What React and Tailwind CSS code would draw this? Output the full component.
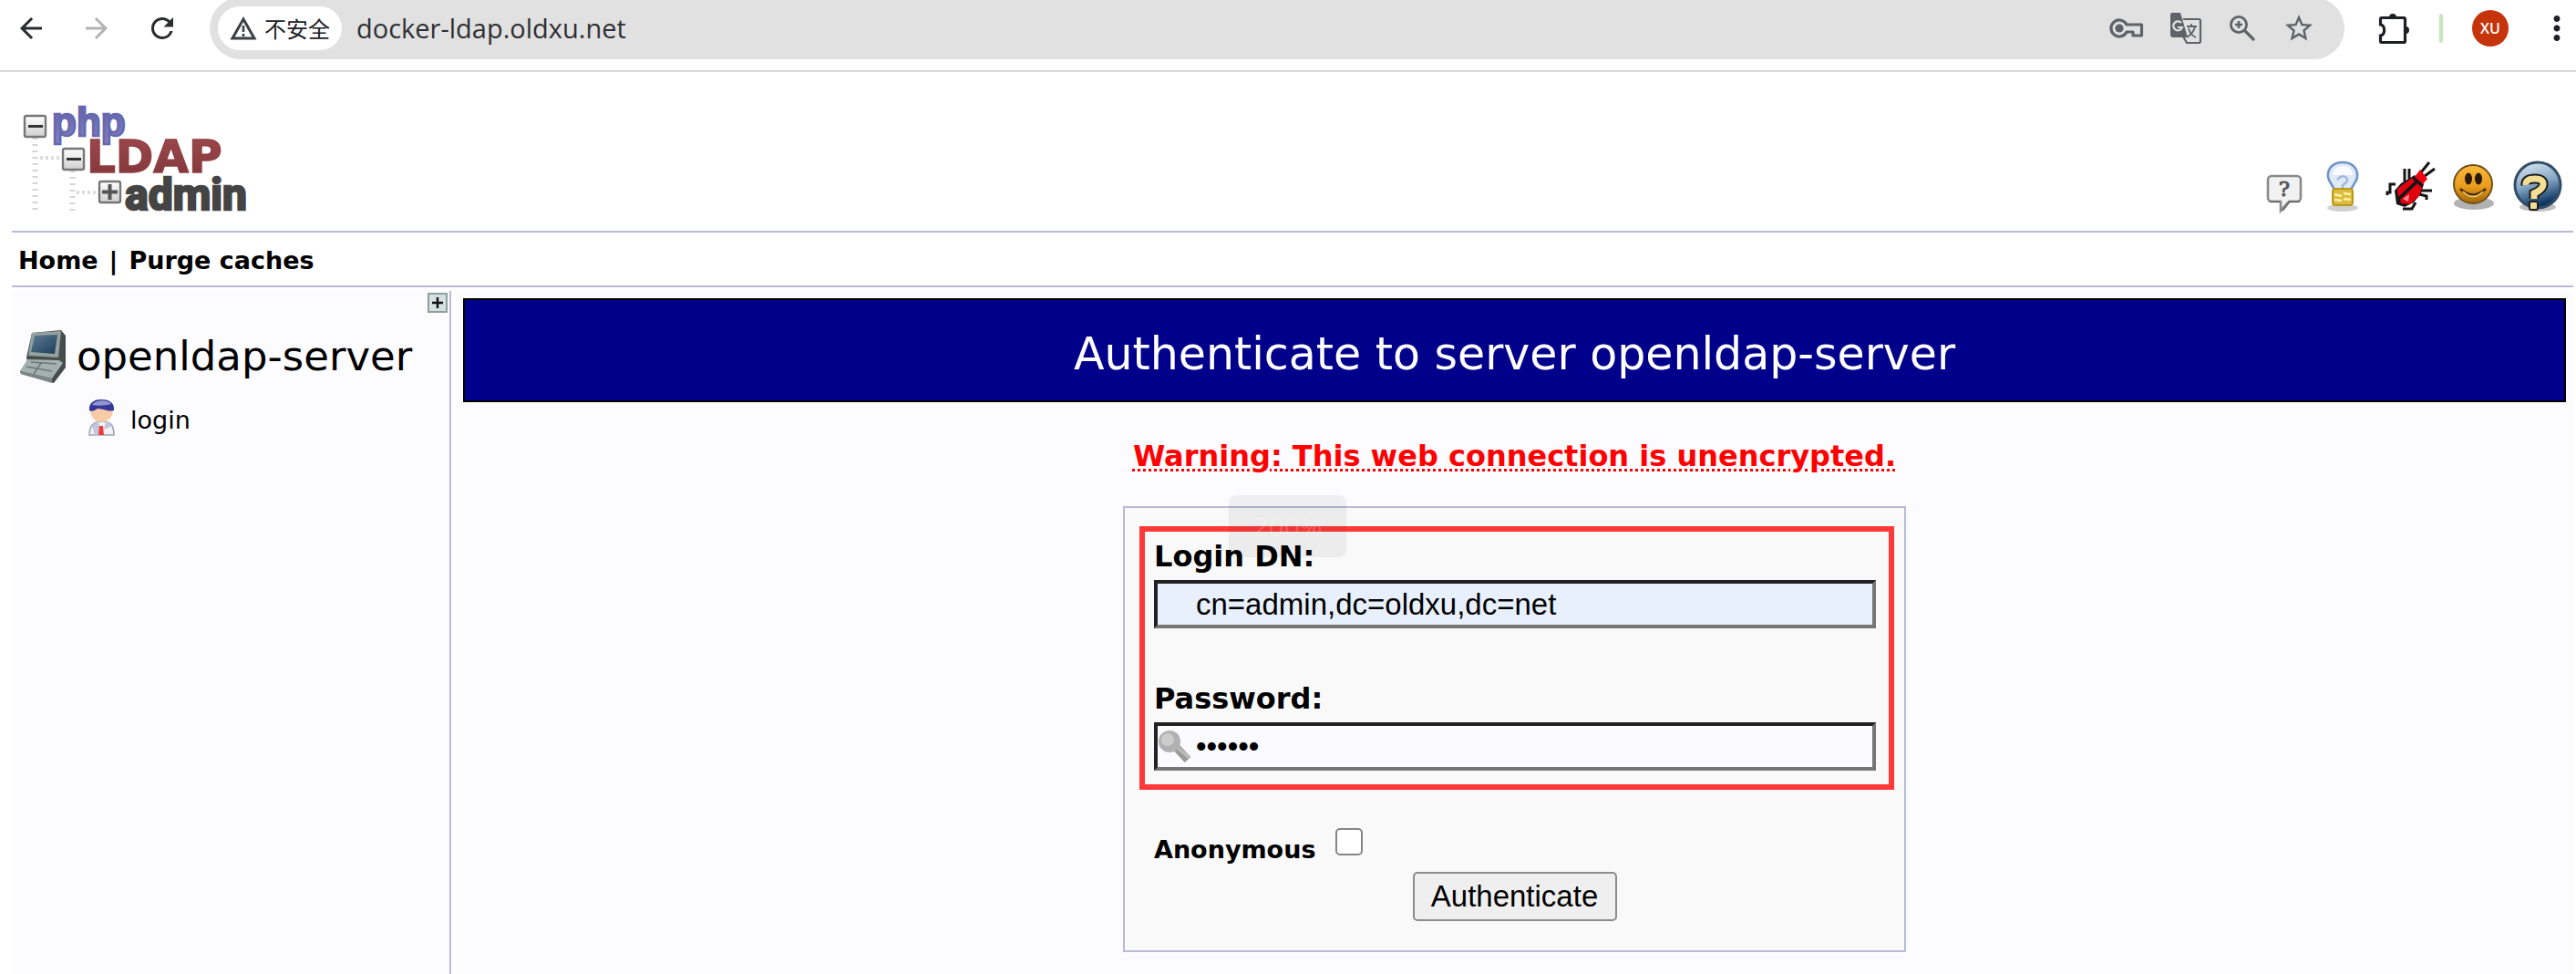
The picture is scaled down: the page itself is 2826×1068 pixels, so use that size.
import React from 'react';
import { MdArrowBack, MdArrowForward, MdRefresh, MdStarBorder, MdMoreVert } from 'react-icons/md';

const WarningIcon = () => (
  <svg width="30" height="28" viewBox="0 0 30 28" fill="none" stroke="#3c4043" strokeWidth="3">
    <path d="M15 4 L27 25 H3 Z" />
    <path d="M15 11 v7 M15 20 v3" strokeWidth="2.6" />
  </svg>
);

const PasswordIcon = () => (
  <svg width="38" height="24" viewBox="0 0 38 24">
    <path
      d="M19 8 A9 9 0 1 0 19 16 H26 V20 H35.500 V8 Z"
      fill="none"
      stroke="#5f6368"
      strokeWidth="3.200"
      strokeLinejoin="round"
    />
    <circle cx="11" cy="12" r="4.600" fill="#5f6368" />
  </svg>
);

const TranslateIcon = () => (
  <svg width="36" height="36" viewBox="0 0 36 36">
    <path d="M15 8 H32 a2 2 0 0 1 2 2 V32 a2 2 0 0 1 -2 2 H19 L15 27" fill="none" stroke="#5f6368" strokeWidth="2.2" />
    <path d="M3 1 H12 L20 28 H4 a3 3 0 0 1 -3 -3 V3 a2 2 0 0 1 2 -2 Z" fill="#5f6368" />
    <path d="M13 12 a5 5 0 1 0 1 5 h-5" fill="none" stroke="#e1e1e1" strokeWidth="2.2" />
    <path d="M19 16 H30 M24 13 V16 M28 16 C27 22 22 26 19 28 M21 18 C22 23 26 27 29 28" fill="none" stroke="#5f6368" strokeWidth="1.8" />
  </svg>
);

const ZoomIcon = () => (
  <svg width="32" height="32" viewBox="0 0 32 32" fill="none" stroke="#5f6368" strokeWidth="2.8">
    <circle cx="12" cy="12" r="8.6" />
    <path d="M18.5 18.5 L29 29" strokeWidth="3.2" />
    <path d="M12 8 V16 M8 12 H16" strokeWidth="2.6" />
  </svg>
);

const ExtensionIcon = () => (
  <svg width="36" height="36" viewBox="0 0 36 36">
    <path
      d="M5 6.5 H29 a1.5 1.5 0 0 1 1.5 1.5 V32 a1.5 1.5 0 0 1 -1.5 1.5 H5 a1.5 1.5 0 0 1 -1.5 -1.5 V26 C9 25 9 15 3.500 14 V8 A1.500 1.500 0 0 1 5 6.500 Z"
      fill="none"
      stroke="#1f2023"
      strokeWidth="3.2"
    />
    <path d="M13 6 a4 4 0 0 1 8 0 Z M31 16 a4 4 0 0 1 0 8 Z" fill="#1f2023" />
  </svg>
);

const Logo = () => (
  <svg width="260" height="124" viewBox="0 0 260 124" overflow="visible" role="img" aria-label="phpLDAPadmin">
    <defs>
      <linearGradient id="node" x1="0" y1="0" x2="0" y2="1">
        <stop offset="0" stopColor="#ffffff" />
        <stop offset="1" stopColor="#cfcfcf" />
      </linearGradient>
      <linearGradient id="red" x1="0" y1="0" x2="0" y2="1">
        <stop offset="0" stopColor="#a04a4e" />
        <stop offset="1" stopColor="#7e3538" />
      </linearGradient>
      <linearGradient id="violet" x1="0" y1="0" x2="0" y2="1">
        <stop offset="0" stopColor="#5f5fa6" />
        <stop offset="1" stopColor="#8080c4" />
      </linearGradient>
    </defs>
    <path d="M18.500 40 V123 M59.500 76 V123" stroke="#d6d6d6" strokeWidth="6" strokeDasharray="2 5" />
    <path d="M24 62 H48 M64 100 H86" stroke="#dcdcdc" strokeWidth="4" strokeDasharray="3 3" />
    <g fill="url(#node)" stroke="#777777" strokeWidth="2.400">
      <rect x="7" y="16" width="23" height="23" rx="2" />
      <rect x="49" y="52" width="23" height="23" rx="2" />
      <rect x="89" y="88" width="23" height="23" rx="2" />
    </g>
    <path d="M11 27.500 H27 M53 63.500 H69" stroke="#333333" strokeWidth="3.200" />
    <path d="M92 99.500 H109 M100.500 91 V108" stroke="#555555" strokeWidth="4" />
    <text x="37" y="38" fontFamily="Liberation Sans, Arial, sans-serif" fontWeight="700" fontSize="44" fill="url(#violet)" stroke="#6868ae" strokeWidth="2.500">php</text>
    <text x="75" y="78" fontFamily="DejaVu Sans, Verdana, sans-serif" fontWeight="700" fontSize="50" fill="url(#red)" stroke="#8f4044" strokeWidth="1.500">LDAP</text>
    <text x="117" y="119" fontFamily="Roboto, sans-serif" fontWeight="700" fontSize="48" fill="#444444" stroke="#444444" strokeWidth="2.500">admin</text>
  </svg>
);

const RequestIcon = () => (
  <svg width="60" height="60" viewBox="0 0 60 60">
    <path d="M18 18 H46 a4 4 0 0 1 4 4 V42 a4 4 0 0 1 -4 4 H37 L28 56 V46 H18 a4 4 0 0 1 -4 -4 V22 a4 4 0 0 1 4 -4 Z" fill="#f1f1f1" stroke="#8b8b8b" strokeWidth="2.600" />
    <path d="M16 46 H27 M49 46 H38 L30 56" fill="none" stroke="#6c6c6c" strokeWidth="2" />
    <text x="32" y="40" textAnchor="middle" fontFamily="DejaVu Serif, serif" fontSize="23" fill="#555555" stroke="#555555">?</text>
  </svg>
);

const BulbIcon = () => (
  <svg width="60" height="60" viewBox="0 0 60 60">
    <ellipse cx="26" cy="53" rx="17" ry="4" fill="#000000" opacity="0.18" />
    <path d="M26 3 C15 3 9 10 10 19 C11 26 16 28 18 36 H34 C36 28 41 26 42 19 C43 10 37 3 26 3 Z" fill="#dfe9f7" stroke="#6f93c8" strokeWidth="2.600" />
    <path d="M15 17 C15 10 20 7 26 7 C32 7 37 10 37 17 Z" fill="#ffffff" opacity="0.800" />
    <path d="M20 22 Q26 15 31 21 Q32 25 26 28 V34" fill="none" stroke="#9db8dd" strokeWidth="2.500" />
    <rect x="15" y="32" width="22" height="18" rx="3" fill="#dcbc3c" stroke="#b99a1e" strokeWidth="2" />
    <path d="M17 38 l8 2 M27 37 l8 1 M17 44 l8 1 M27 43 l8 1" stroke="#fff3ab" strokeWidth="2.600" />
  </svg>
);

const BugIcon = () => (
  <svg width="60" height="60" viewBox="0 0 60 60">
    <g fill="none" stroke="#151515" strokeWidth="3">
      <path d="M42 14 L51 3 M46 18 L57 10 M24 24 V10 M29 21 V10 M14 27 H8 V36 H5 V39 M42 34 H54 M40 38 L48 40 V44 M22 54 H32 L36 47" />
    </g>
    <path d="M15 49 L13 34 L20 26 L35 17 L45 27 L42 37 L34 47 L24 52 Z" fill="#151515" />
    <path d="M16 32 L32 20 L35 24 L17 41 Z M19 44 L38 26 L43 31 L40 40 L30 49 L20 48 Z" fill="#e0000f" />
    <path d="M35 19 L41 11 L49 21 L44 27 Z" fill="#f00010" />
    <path d="M22 43 L29 38 L28 46 Z" fill="#ff8c8c" />
  </svg>
);

const SmileIcon = () => (
  <svg width="60" height="60" viewBox="0 0 60 60">
    <defs>
      <linearGradient id="smile" x1="0" y1="0" x2="0" y2="1">
        <stop offset="0" stopColor="#f9b93c" />
        <stop offset="0.550" stopColor="#e99d1c" />
        <stop offset="1" stopColor="#a2670b" />
      </linearGradient>
    </defs>
    <ellipse cx="30" cy="48" rx="22" ry="7" fill="#000000" opacity="0.300" />
    <circle cx="29" cy="27" r="21" fill="url(#smile)" stroke="#70501a" strokeWidth="2" />
    <ellipse cx="24" cy="21" rx="4" ry="6.500" fill="#2a1a05" />
    <ellipse cx="35" cy="21" rx="4" ry="6.500" fill="#2a1a05" />
    <path d="M15 32 Q29 45 43 32" fill="none" stroke="#4a2e06" strokeWidth="2.600" />
    <path d="M18 35 Q29 46 40 35" fill="none" stroke="#ffd372" strokeWidth="1.500" />
  </svg>
);

const HelpIcon = () => (
  <svg width="60" height="60" viewBox="0 0 60 60">
    <defs>
      <linearGradient id="help" x1="0" y1="0" x2="0.300" y2="1">
        <stop offset="0" stopColor="#e3eef6" />
        <stop offset="0.550" stopColor="#86a8c6" />
        <stop offset="1" stopColor="#0e3563" />
      </linearGradient>
    </defs>
    <ellipse cx="30" cy="52" rx="20" ry="5" fill="#000000" opacity="0.250" />
    <circle cx="30" cy="28" r="25" fill="url(#help)" stroke="#344d66" strokeWidth="3" />
    <path d="M17 28 Q16 21 27 21 Q37 21 36 28 Q35 33 26 37 V43" fill="none" stroke="#1d1d1d" strokeWidth="11" />
    <path d="M17 28 Q16 21 27 21 Q37 21 36 28 Q35 33 26 37 V43" fill="none" stroke="#f1dd96" strokeWidth="7" />
    <rect x="21" y="46" width="9" height="9" rx="2" fill="#f1dd96" stroke="#1d1d1d" strokeWidth="2" />
  </svg>
);

const LaptopIcon = () => (
  <svg width="54" height="60" viewBox="0 0 54 60">
    <defs>
      <linearGradient id="screen" x1="0" y1="0" x2="1" y2="1">
        <stop offset="0" stopColor="#5d7d97" />
        <stop offset="1" stopColor="#1d3c57" />
      </linearGradient>
    </defs>
    <path d="M14 4 L46 1 L51 7 L51 42 L38 59 L2 49 L1 46 L9 36 L8 31 Z" fill="#454e4d" />
    <path d="M14 4 L46 2 L43 31 L10 29 Z" fill="#93a19f" />
    <path d="M17 7 L42 6 L39 27 L13 25 Z" fill="url(#screen)" />
    <path d="M9 33 L44 34 L48 37 L36 54 L1 46 Z" fill="#a5b1ae" />
    <path d="M13 36 L41 38 M8 41 L36 46 M24 37 L16 49" stroke="#6c7876" strokeWidth="1.600" />
    <path d="M1 46 L36 54 V59 L2 49 Z" fill="#7c8783" />
  </svg>
);

const UserIcon = () => (
  <svg width="30" height="42" viewBox="0 0 30 42">
    <path d="M1 40 C1 29 6 25 15 25 C24 25 28 29 28 40 Z" fill="#f0f1f7" stroke="#a2a4b4" strokeWidth="1.600" />
    <path d="M4 30 Q9 25 11 25 L14 40 H7 Z M26 30 Q22 25 19 25 L17 34 Z" fill="#c3c6da" />
    <path d="M12 30 H16 L17 40 H11 Z" fill="#ee3b3b" />
    <ellipse cx="14.500" cy="15" rx="12" ry="10.500" fill="#f7cba6" />
    <path d="M1 13 C0 4 7 1 14 1 C22 1 29 4 28 13 C22 15 17 11 10 11 C7 13 4 15 1 13 Z" fill="#35379a" />
    <path d="M4 7 C8 1 21 1 25 6 C18 8 11 8 4 7 Z" fill="#8e98cf" />
  </svg>
);

const KeyIcon = () => (
  <svg width="38" height="36" viewBox="0 0 38 36">
    <path d="M19 18 L33 33" stroke="#999999" strokeWidth="9" />
    <path d="M20 18 L35 31" stroke="#b9b9b9" strokeWidth="4" />
    <circle cx="13" cy="13" r="12" fill="#b1b1b1" />
    <circle cx="11" cy="11" r="7" fill="#cccccc" />
  </svg>
);

const tools = [
  { name: 'Request feature', Icon: RequestIcon },
  { name: 'Hints', Icon: BulbIcon },
  { name: 'Report a bug', Icon: BugIcon },
  { name: 'Donate', Icon: SmileIcon },
  { name: 'Help', Icon: HelpIcon },
];

const BrowserBar = () => (
  <div className="h-[79px] overflow-hidden border-b-2 border-[#d9d9d9] bg-white">
    <div className="flex h-[62px] items-center pl-4">
      <div className="flex w-[214px] shrink-0 items-center gap-9">
        <button aria-label="Back"><MdArrowBack size={36} color="#2b2c2e" /></button>
        <button aria-label="Forward"><MdArrowForward size={36} color="#b4b4b4" /></button>
        <button aria-label="Reload"><MdRefresh size={36} color="#2b2c2e" /></button>
      </div>
      <div className="flex h-[68px] min-w-0 flex-1 items-center rounded-full bg-[#e1e1e1] pr-8 pl-[9px]">
        <button className="flex h-12 w-[136px] items-center justify-center gap-2 rounded-full bg-white font-['Noto_Sans_CJK_SC',sans-serif] text-2xl text-[#202124]">
          <WarningIcon />
          <span>不安全</span>
        </button>
        <input
          aria-label="Address"
          defaultValue="docker-ldap.oldxu.net"
          className="ml-4 min-w-0 flex-1 bg-transparent font-['Open_Sans',sans-serif] text-[29px] text-[#2f3033] outline-none"
        />
        <div className="flex items-center gap-7">
          <button aria-label="Passwords"><PasswordIcon /></button>
          <button aria-label="Translate"><TranslateIcon /></button>
          <button aria-label="Zoom"><ZoomIcon /></button>
          <button aria-label="Bookmark"><MdStarBorder size={36} color="#5f6368" /></button>
        </div>
      </div>
      <div className="flex items-center pl-9">
        <button aria-label="Extensions"><ExtensionIcon /></button>
        <div className="ml-8 h-8 w-1 rounded bg-[#c5e8bb]" />
        <button className="ml-8 h-10 w-10 rounded-full bg-[#c5340b] font-['Open_Sans',sans-serif] text-base font-semibold text-white">XU</button>
        <button aria-label="Menu" className="ml-8"><MdMoreVert size={42} color="#1f2023" /></button>
      </div>
    </div>
  </div>
);

const Sidebar = () => (
  <aside className="w-[482px] shrink-0 border-r-2 border-[#b9b9d9] bg-[#fcfcff] pt-0.5">
    <div className="flex justify-end pr-0.5">
      <button aria-label="Expand" className="flex h-[22px] w-[22px] items-center justify-center border-2 border-[#8f9e9e] bg-[#d6e2e2]">
        <svg width="14" height="14" viewBox="0 0 14 14">
          <path d="M7 1 V13 M1 7 H13" stroke="#111111" strokeWidth="2.400" />
        </svg>
      </button>
    </div>
    <div className="mt-[18px] flex items-center gap-[9px] pl-2">
      <LaptopIcon />
      <span className="text-[45px] leading-[60px]">openldap-server</span>
    </div>
    <a href="#" className="mt-4 flex items-end gap-4 pl-[84px] text-[27px] leading-9">
      <UserIcon />
      <span>login</span>
    </a>
  </aside>
);

const fieldClass = 'block h-[53px] w-full border-4 border-t-[#222222] border-l-[#222222] border-r-[#767676] border-b-[#767676] pl-[42px] font-[\'Liberation_Sans\',Arial,sans-serif] text-[33px] outline-none';

const LoginForm = () => (
  <form className="relative mt-[35px] w-[859px] border-2 border-[#b9b9d9] bg-[#f9f9f9] pt-5 pb-8">
    <div className="mr-[11px] ml-4 border-6 border-[#ff3838] pt-[7px] pr-3.5 pb-[15px] pl-2.5">
      <label htmlFor="login" className="block text-[32px] leading-10 font-bold">Login DN:</label>
      <input id="login" type="text" defaultValue="cn=admin,dc=oldxu,dc=net" className={`${fieldClass} mt-1.5 bg-[#e8f0fe]`} />
      <label htmlFor="password" className="mt-[57px] block text-[32px] leading-10 font-bold">Password:</label>
      <div className="relative mt-1.5">
        <input id="password" type="password" defaultValue="secret" className={`${fieldClass} bg-[#fafaff]`} />
        <div className="pointer-events-none absolute top-2 left-1">
          <KeyIcon />
        </div>
      </div>
    </div>
    <div className="mt-10 flex items-start gap-[22px] pl-8">
      <label htmlFor="anonymous" className="pt-1.5 text-[27px] leading-10 font-bold">Anonymous</label>
      <input id="anonymous" type="checkbox" className="mt-0.5 h-[30px] w-[30px] appearance-none rounded-[5px] border-2 border-[#858585] bg-white" />
    </div>
    <div className="mt-1 flex justify-center">
      <button type="button" className="h-[54px] w-56 rounded-[5px] border-2 border-[#8c8c8c] bg-[#efefef] font-['Liberation_Sans',Arial,sans-serif] text-[33px]">
        Authenticate
      </button>
    </div>
    {/* zoom level bubble, nearly faded out */}
    <div className="absolute -top-3.5 left-[114px] flex h-[68px] w-[129px] items-center justify-center rounded-lg bg-black/5 font-['Open_Sans',sans-serif] text-3xl text-white/20">
      200%
    </div>
  </form>
);

const App = () => {
  return (
    <div className="flex min-h-screen flex-col bg-white font-['DejaVu_Sans',Verdana,sans-serif] text-black">
      <BrowserBar />

      <div className="flex flex-1 flex-col pr-[3px] pl-[13px]">
        {/* Logo and tool icons */}
        <header className="flex h-44 items-end justify-between border-b-2 border-[#b9b9d9] pr-[9px] pb-[18px] pl-[7px]">
          <Logo />
          <div className="flex gap-2.5">
            {tools.map(({ name, Icon }) => (
              <a key={name} href="#" aria-label={name}><Icon /></a>
            ))}
          </div>
        </header>

        <nav className="flex h-[60px] items-center gap-3 border-b-2 border-[#b9b9d9] pt-1 pl-[7px] text-[27px] font-bold">
          <a href="#">Home</a>
          <span>|</span>
          <a href="#">Purge caches</a>
        </nav>

        <div className="mt-1 flex flex-1 gap-1">
          <Sidebar />
          <main className="flex min-w-0 flex-1 flex-col items-center bg-[#fcfcff] pt-2 pr-2 pb-6 pl-[9px]">
            <h1 className="w-full border-2 border-black bg-[#00008b] pt-[30px] pb-5 text-center text-[49px] leading-[60px] text-white">
              Authenticate to server openldap-server
            </h1>
            <p className="mt-[39px] text-[32px] leading-10 font-bold text-[#ff0000] underline decoration-dotted decoration-3 underline-offset-3">
              Warning: This web connection is unencrypted.
            </p>
            <LoginForm />
          </main>
        </div>
      </div>
    </div>
  );
};

export default App;
